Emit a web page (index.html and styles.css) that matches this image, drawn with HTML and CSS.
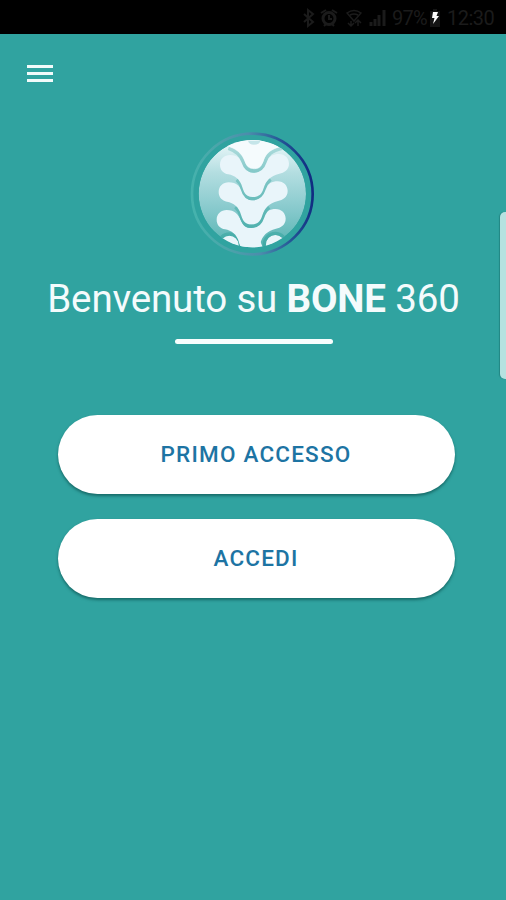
FILE: index.html
```html
<!DOCTYPE html>
<html lang="it">
<head>
<meta charset="utf-8">
<title>BONE 360</title>
<link rel="stylesheet" href="styles.css">
</head>
<body>
<div class="status">
  <svg class="status-icons" viewBox="0 0 90 22" fill="none" stroke="currentColor" stroke-width="2">
    <path d="M3 7l9 8-5 4V3l5 4-9 8"/>
    <circle cx="28" cy="11.500" r="6" stroke-width="3"/>
    <path d="M20 6l5-3M36 6l-5-3M23 19l2-2M33 19l-2-2M28 8v4h3"/>
    <path d="M46 6q7-5 14 0l-7 8zM49 8q4-2 8 0M50 19v-5M47 16l3 3 3-3M57 14v5M54 16l3-3 3 3" stroke-width="1.500"/>
    <path d="M70 19v-4M74 19v-7M78 19V8M83 19V3" stroke-width="3"/>
  </svg>
  <span class="percent">97%</span>
  <svg class="battery" viewBox="0 0 12 20"><path class="cell" d="M1 3h3V1h4v2h3v16H1z"/><path class="bolt" d="M4 4h5L7.500 8H10l-6 8 1.500-6H3z"/></svg>
  <span class="clock">12:30</span>
</div>
<header class="bar">
  <button class="menu" aria-label="Menu"><i></i><i></i><i></i></button>
</header>
<main>
  <svg class="logo" viewBox="0 0 432 420">
    <defs>
      <linearGradient id="ring" x1="0" x2="1" y1=".55" y2=".45">
        <stop offset="0" stop-color="#45b3ad"/><stop offset=".25" stop-color="#4ba5aa"/>
        <stop offset=".52" stop-color="#4c8cac"/><stop offset=".78" stop-color="#245596"/><stop offset="1" stop-color="#102b80"/>
      </linearGradient>
      <linearGradient id="disc" x1="0" x2="0" y1="0" y2="1">
        <stop offset="0" stop-color="#eef9fb"/><stop offset=".3" stop-color="#b4dee1"/>
        <stop offset=".65" stop-color="#86c9cc"/><stop offset="1" stop-color="#55b3b1"/>
      </linearGradient>
      <linearGradient id="gap" gradientUnits="userSpaceOnUse" x1="0" x2="0" y1="50" y2="370">
        <stop offset="0" stop-color="#b5dfe0"/><stop offset=".3" stop-color="#83c8c8"/><stop offset="1" stop-color="#3fa9a5"/>
      </linearGradient>
      <clipPath id="round"><circle cx="217" cy="209" r="161"/></clipPath>
      <path id="bone" d="M150 93C175 93 185 108 192 122C200 140 208 147 222 147C240 147 248 132 257 115C267 96 280 90 297 90C315 90 327 103 327 119C327 138 312 146 298 149C270 156 258 170 251 192C245 212 236 219 218 219C200 219 193 210 187 190C180 165 165 155 145 151C130 148 120 138 120 122C120 105 133 93 150 93Z"/>
    </defs>
    <circle cx="217" cy="210" r="181" fill="none" stroke="url(#ring)" stroke-width="8"/>
    <g clip-path="url(#round)">
      <circle cx="217" cy="209" r="161" fill="url(#disc)"/>
      <g fill="#e9f5fa">
        <circle cx="148" cy="363" r="29"/><circle cx="286" cy="361" r="29"/>
        <circle class="gap" cx="148" cy="363" r="33"/><circle class="gap" cx="286" cy="361" r="33"/>
        <use href="#bone" x="-10" y="165"/>
        <path d="M177 352H241L250 375H184Z"/>
        <path class="gap" d="M166 249C174 256 180 266 183 277C190 299 197 307 214 307C233 307 242 298 248 280C252 267 258 257 268 250"/>
        <use href="#bone" x="-4" y="82"/>
        <path class="gap" d="M170 167C178 174 184 184 187 195C193 216 201 224 218 224C237 224 246 215 252 196C256 183 262 174 272 166"/>
        <use href="#bone"/>
        <path class="gap" d="M145 73C172 82 183 95 189 113C196 133 204 141 222 141C241 141 249 132 255 114C262 92 275 80 306 73"/>
        <path fill="#f5fbfd" d="M135 65C172 71 187 91 194 112C199 127 207 134 222 134C238 134 245 126 251 110C258 87 273 73 306 68L287 40H145Z"/>
        <path d="M204 50H241Q239 62 222 62Q207 62 204 50Z" fill="#c5e5e9"/>
      </g>
    </g>
  </svg>
  <h1>Benvenuto su <b>BONE</b> 360</h1>
  <div class="rule"></div>
  <div class="actions">
    <button class="action">PRIMO ACCESSO</button>
    <button class="action">ACCEDI</button>
  </div>
</main>
<div class="edge-handle"></div>
</body>
</html>
```
FILE: styles.css
```css
* { box-sizing: border-box; }
body {
  margin: 0;
  width: 506px;
  height: 900px;
  overflow: hidden;
  position: relative;
  background: #30a3a0;
  font-family: Roboto, sans-serif;
}
.status {
  height: 34px;
  background: #000;
  color: #1b1b1b;
  display: flex;
  align-items: center;
  justify-content: flex-end;
  padding: 2px 11px 0 0;
  font-size: 20px;
}
.status-icons { width: 90px; height: 22px; margin-right: 1px; }
.percent { width: 35px; white-space: nowrap; letter-spacing: -.8px; }
.battery { width: 12px; height: 20px; margin: 0 6px 0 2px; }
.cell { fill: #151515; }
.bolt { fill: #fff; }
.clock { width: 48px; white-space: nowrap; letter-spacing: -.5px; }
.bar { height: 90px; padding: 31px 27px; }
.menu {
  display: flex;
  flex-direction: column;
  gap: 4px;
  width: 26px;
  padding: 0;
  border: 0;
  background: none;
}
.menu i { height: 3px; background: #f2fbfb; }
main { display: flex; flex-direction: column; align-items: center; }
.logo { width: 144px; height: 140px; margin-right: 2px; }
.gap { fill: none; stroke: url(#gap); stroke-width: 10px; }
h1 {
  margin: 12px 0 0 1px;
  font-size: 38.5px;
  line-height: 46px;
  font-weight: 400;
  letter-spacing: -.16px;
  white-space: nowrap;
  color: #f4fbfc;
}
h1 b { font-weight: 700; }
.rule {
  width: 158px;
  height: 5px;
  margin: 17px 0 0 1px;
  border-radius: 3px;
  background: #f8fdfd;
}
.actions { display: flex; flex-direction: column; gap: 25px; margin: 71px 0 0 6px; }
.action {
  width: 397px;
  height: 79px;
  padding: 0 0 2px;
  border: 0;
  border-radius: 40px;
  background: #fff;
  color: #1d74a3;
  font: 500 22.5px Roboto, sans-serif;
  letter-spacing: 1.2px;
  box-shadow: 0 2px 3px rgba(0, 60, 58, .55);
}
.edge-handle {
  position: absolute;
  right: 0;
  top: 212px;
  width: 6px;
  height: 167px;
  border-radius: 5px 0 0 5px;
  background: #b5e2e0;
  box-shadow: -1px 0 1px rgba(0, 70, 70, .3);
}
```
